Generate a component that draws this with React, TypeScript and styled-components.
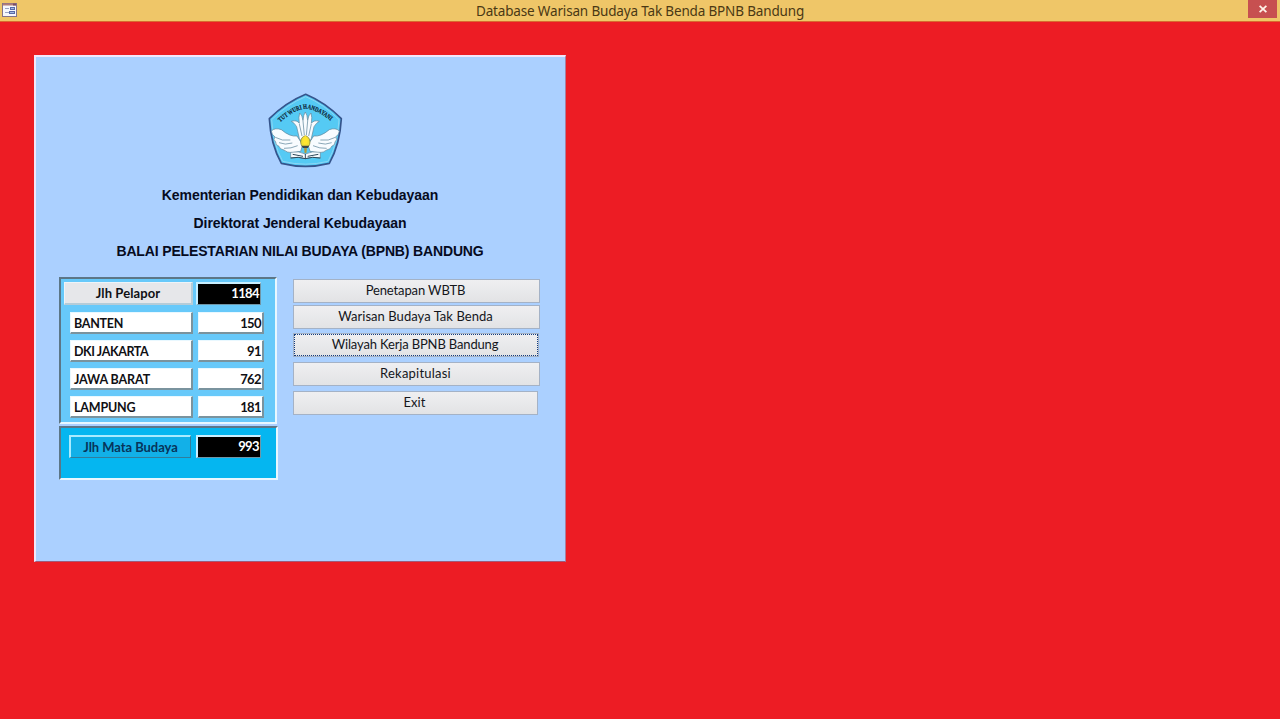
import React from "react";
import styled, { createGlobalStyle } from "styled-components";

const GlobalStyle = createGlobalStyle`
  * { box-sizing: border-box; }
  html, body { margin: 0; padding: 0; }
  body { background: #ed1c24; overflow: hidden; }
`;

const Window = styled.div`
  width: 1280px;
  height: 719px;
  background: #ed1c24;
  display: flex;
  flex-direction: column;
`;

const TitleBar = styled.header`
  height: 22px;
  flex: none;
  display: grid;
  grid-template-columns: 32px 1fr 32px;
  align-items: start;
  background: #efc668;
  border-bottom: 1px solid #d9692f;
`;

const FormIcon = styled.svg`
  display: block;
  margin: 3px 0 0 2px;
`;

const Title = styled.h1`
  margin: 0;
  text-align: center;
  font: 400 13.5px/22px "Noto Sans", sans-serif;
  letter-spacing: -0.16px;
  color: #4a3814;
`;

const CloseButton = styled.button`
  width: 29px;
  height: 18px;
  padding: 0;
  border: 0;
  display: flex;
  align-items: center;
  justify-content: center;
  background: #c75050;
`;

const Form = styled.main`
  width: 532px;
  height: 507px;
  margin: 33px 0 0 34px;
  border: 2px solid;
  border-color: #f3e6fa #a77f9f #a05a78 #f3e6fa;
  border-right-width: 1px;
  border-bottom-width: 1px;
  background: #abd0ff;
`;

const Header = styled.div`
  display: flex;
  flex-direction: column;
  align-items: center;
  padding-top: 28px;
`;

const Emblem = styled.svg`
  display: block;
  margin: 0 0 6px 9px;
`;

const Heading = styled.h2<{ $track: number }>`
  margin: 0 1px 0 0;
  font: 700 14px/28px "Liberation Sans", Arial, sans-serif;
  letter-spacing: ${(p) => p.$track}px;
  color: #060b1e;
  white-space: nowrap;
`;

const Columns = styled.div`
  display: flex;
  align-items: flex-start;
  gap: 15px;
  padding: 12px 0 0 23px;
`;

const Stats = styled.div`
  display: flex;
  flex-direction: column;
  gap: 2px;
  width: 219px;
`;

const Group = styled.section<{ $total?: boolean }>`
  width: ${(p) => (p.$total ? 219 : 218)}px;
  height: ${(p) => (p.$total ? 54 : 147)}px;
  padding: ${(p) => (p.$total ? "7px 0 0 8px" : "3px 0 0 3px")};
  border: 2px solid;
  border-color: #5c7687 #e8f7ff #e8f7ff #5c7687;
  background: ${(p) => (p.$total ? "#05b6f0" : "#67c9fa")};
`;

const Row = styled.div<{ $kind: "heading" | "region" | "total" }>`
  display: flex;
  gap: ${(p) => (p.$kind === "heading" ? 3 : 5)}px;
  margin: ${(p) => (p.$kind === "region" ? "0 0 6px 6px" : "0 0 7px")};
`;

const Label = styled.div<{ $kind: "heading" | "region" | "total"; $track?: number }>`
  width: ${(p) => (p.$kind === "heading" ? 129 : p.$kind === "region" ? 123 : 122)}px;
  height: ${(p) => (p.$kind === "region" ? 22 : 23)}px;
  padding-left: ${(p) => (p.$kind === "region" ? 3 : 0)}px;
  text-align: ${(p) => (p.$kind === "region" ? "left" : "center")};
  font: 700 ${(p) => (p.$kind === "region" ? "12.5px/21px" : "13px/20px")} Lato, Calibri, sans-serif;
  letter-spacing: ${(p) => p.$track ?? 0}px;
  white-space: nowrap;
  color: ${(p) => (p.$kind === "total" ? "#07345a" : "#101014")};
  background: ${(p) =>
    p.$kind === "total" ? "#12b0e8" : p.$kind === "heading" ? "#e6e7ea" : "#fff"};
  border-style: solid;
  border-width: ${(p) => (p.$kind === "total" ? "2px 1px 1px 2px" : "1px 2px 2px 1px")};
  border-color: ${(p) =>
    p.$kind === "region"
      ? "#e9f8ff #7a939e #7a939e #e9f8ff"
      : p.$kind === "total"
        ? "#a9ebff #317d9c #317d9c #a9ebff"
        : "#eef4f8 #b5ccd8 #b5ccd8 #eef4f8"};
`;

const Value = styled.output<{ $dark?: boolean }>`
  display: block;
  width: ${(p) => (p.$dark ? 65 : 66)}px;
  height: ${(p) => (p.$dark ? 23 : 22)}px;
  padding-right: 1px;
  text-align: right;
  font: 700 ${(p) => (p.$dark ? "13px/19px" : "13px/21px")} Lato, Calibri, sans-serif;
  letter-spacing: -0.6px;
  color: ${(p) => (p.$dark ? "#fff" : "#101014")};
  background: ${(p) => (p.$dark ? "#000" : "#fff")};
  border: solid;
  border-width: ${(p) => (p.$dark ? "2px 1px 1px 2px" : "1px 2px 2px 1px")};
  border-color: ${(p) => (p.$dark ? "#c9efff #7095a5 #7095a5 #c9efff" : "#e9f8ff #7a939e #7a939e #e9f8ff")};
`;

const Menu = styled.nav`
  display: flex;
  flex-direction: column;
  padding-top: 2px;
`;

const MenuButton = styled.button<{
  $gap?: number;
  $width?: number;
  $focused?: boolean;
  $track: number;
}>`
  width: ${(p) => p.$width ?? 247}px;
  height: 24px;
  margin: ${(p) => p.$gap ?? 0}px 0 0;
  padding: 0 2px 2px 0;
  font: 400 13px/20px Lato, Calibri, sans-serif;
  letter-spacing: ${(p) => p.$track}px;
  color: #14161b;
  background: linear-gradient(#efeff1, #e2e3e5);
  border: 1px solid #a4b2c6;
  outline: ${(p) => (p.$focused ? "1px dotted #123c80" : "none")};
  outline-offset: -2px;
`;

const regions = [
  { name: "BANTEN", count: 150, track: -0.28 },
  { name: "DKI JAKARTA", count: 91, track: -0.4 },
  { name: "JAWA BARAT", count: 762, track: -0.12 },
  { name: "LAMPUNG", count: 181, track: -0.18 },
];

const TutWuriEmblem = () => (
  <Emblem width="90" height="90" viewBox="0 0 270 270">
    <defs>
      <path id="motto" d="M61 112 Q103 74 137 71 Q174 74 217 112" />
    </defs>
    <path
      d="M137 28 Q195 52 244 101 Q240 178 208 235 Q137 253 64 235 Q32 178 28 101 Q78 52 137 28Z"
      fill="#55caf4" stroke="#35548c" strokeWidth="5" strokeLinejoin="round"
    />
    <path
      d="M137 35 Q193 58 237 104 Q233 177 204 229 Q137 246 68 229 Q39 177 35 104 Q81 58 137 35Z"
      fill="none" stroke="#8bd6f5" strokeWidth="3"
    />
    <text fontFamily="Liberation Serif, serif" fontSize="20" fontWeight="700" fill="#0c2436" stroke="#0c2436" strokeWidth="0.6">
      <textPath href="#motto" textLength="172" lengthAdjust="spacingAndGlyphs">TUT WURI HANDAYANI</textPath>
    </text>
    <g fill="#f8fcff" stroke="#5f8295" strokeWidth="2" strokeLinejoin="round">
      <path d="M111 153 Q90 156 64 134 Q45 127 34 138 Q35 149 45 156 Q38 163 47 171 Q46 180 57 184 Q59 193 72 195 Q80 203 96 203 L122 199 L128 179Z" />
      <path d="M161 153 Q182 156 208 134 Q227 127 238 138 Q237 149 227 156 Q234 163 225 171 Q226 180 215 184 Q213 193 200 195 Q192 203 176 203 L150 199 L144 179Z" />
      <path d="M119 165 L110 125 Q104 114 94 109 Q111 104 118 115 Q115 96 119 84 Q127 90 129 107 Q130 89 136 81 Q142 89 143 107 Q145 90 153 84 Q157 96 154 115 Q161 104 178 109 Q168 114 162 125 L153 165Z" />
      <path d="M92 202 Q116 197 136 207 Q157 197 181 202 L181 219 Q157 214 136 221 Q115 214 92 219Z" />
    </g>
    <g fill="none" stroke="#527b92" strokeWidth="2">
      <path d="M118 117 L126 153 M129 108 L133 151 M143 108 L139 151 M154 117 L146 153" />
      <path d="M46 157 Q66 169 91 165 M57 173 Q75 181 97 174 M72 190 Q93 191 113 182 M226 157 Q206 169 181 165 M215 173 Q197 181 175 174 M200 190 Q179 191 159 182" />
    </g>
    <path d="M92 219 Q115 214 136 221 Q157 214 181 219 M136 207 V222 M98 208 L129 214 M175 208 L143 214" fill="none" stroke="#2f4a5a" strokeWidth="3" />
    <ellipse cx="136" cy="171" rx="14" ry="18" fill="#f0df34" stroke="#736f29" strokeWidth="2" />
    <path d="M136 150 Q149 167 140 178 L132 178 Q125 167 136 150Z" fill="#ffe52f" />
    <path d="M124 182 H148 L143 189 H129Z" fill="#39444b" />
    <path d="M132 190 H141 L139 204 H134Z" fill="#b59a39" />
  </Emblem>
);

export default function App() {
  return (
    <Window>
      <GlobalStyle />
      <TitleBar>
        <FormIcon width="15" height="14" viewBox="0 0 15 14">
          <rect x=".5" y=".5" width="14" height="13" fill="#f6f7fc" stroke="#83738b" />
          <path d="M1 1.5H14" stroke="#b17b78" strokeWidth="2" />
          <path d="M11 1.5H14" stroke="#774d67" strokeWidth="2" />
          <path d="M3 5.5H7M3 9.5H7" stroke="#9aa5c6" />
          <path d="M8 5.5H13M7 9.5H13" stroke="#586aa8" strokeWidth="3" />
          <path d="M9 5.5H12M8 9.5H12" stroke="#a4b9e1" />
        </FormIcon>
        <Title>Database Warisan Budaya Tak Benda BPNB Bandung</Title>
        <CloseButton aria-label="Close">
          <svg width="8" height="8" viewBox="0 0 8 8">
            <path d="M.6 .8L7.4 7.2M7.4 .8L.6 7.2" stroke="#fff3e8" strokeWidth="1.8" />
          </svg>
        </CloseButton>
      </TitleBar>
      <Form>
        <Header>
          <TutWuriEmblem />
          <Heading $track={-0.08}>Kementerian Pendidikan dan Kebudayaan</Heading>
          <Heading $track={-0.06}>Direktorat Jenderal Kebudayaan</Heading>
          <Heading $track={-0.15}>BALAI PELESTARIAN NILAI BUDAYA (BPNB) BANDUNG</Heading>
        </Header>
        <Columns>
          <Stats>
            <Group>
              <Row $kind="heading">
                <Label $kind="heading" $track={0.1}>Jlh Pelapor</Label>
                <Value $dark>1184</Value>
              </Row>
              {regions.map((r) => (
                <Row $kind="region" key={r.name}>
                  <Label $kind="region" $track={r.track}>{r.name}</Label>
                  <Value>{r.count}</Value>
                </Row>
              ))}
            </Group>
            <Group $total>
              <Row $kind="total">
                <Label $kind="total" $track={-0.05}>Jlh Mata Budaya</Label>
                <Value $dark>993</Value>
              </Row>
            </Group>
          </Stats>
          <Menu>
            <MenuButton $track={-0.12}>Penetapan WBTB</MenuButton>
            <MenuButton $gap={2} $track={0.04}>Warisan Budaya Tak Benda</MenuButton>
            <MenuButton $gap={4} $width={246} $focused $track={-0.15}>Wilayah Kerja BPNB Bandung</MenuButton>
            <MenuButton $gap={5} $track={0.22}>Rekapitulasi</MenuButton>
            <MenuButton $gap={5} $width={245} $track={0.1}>Exit</MenuButton>
          </Menu>
        </Columns>
      </Form>
    </Window>
  );
}
